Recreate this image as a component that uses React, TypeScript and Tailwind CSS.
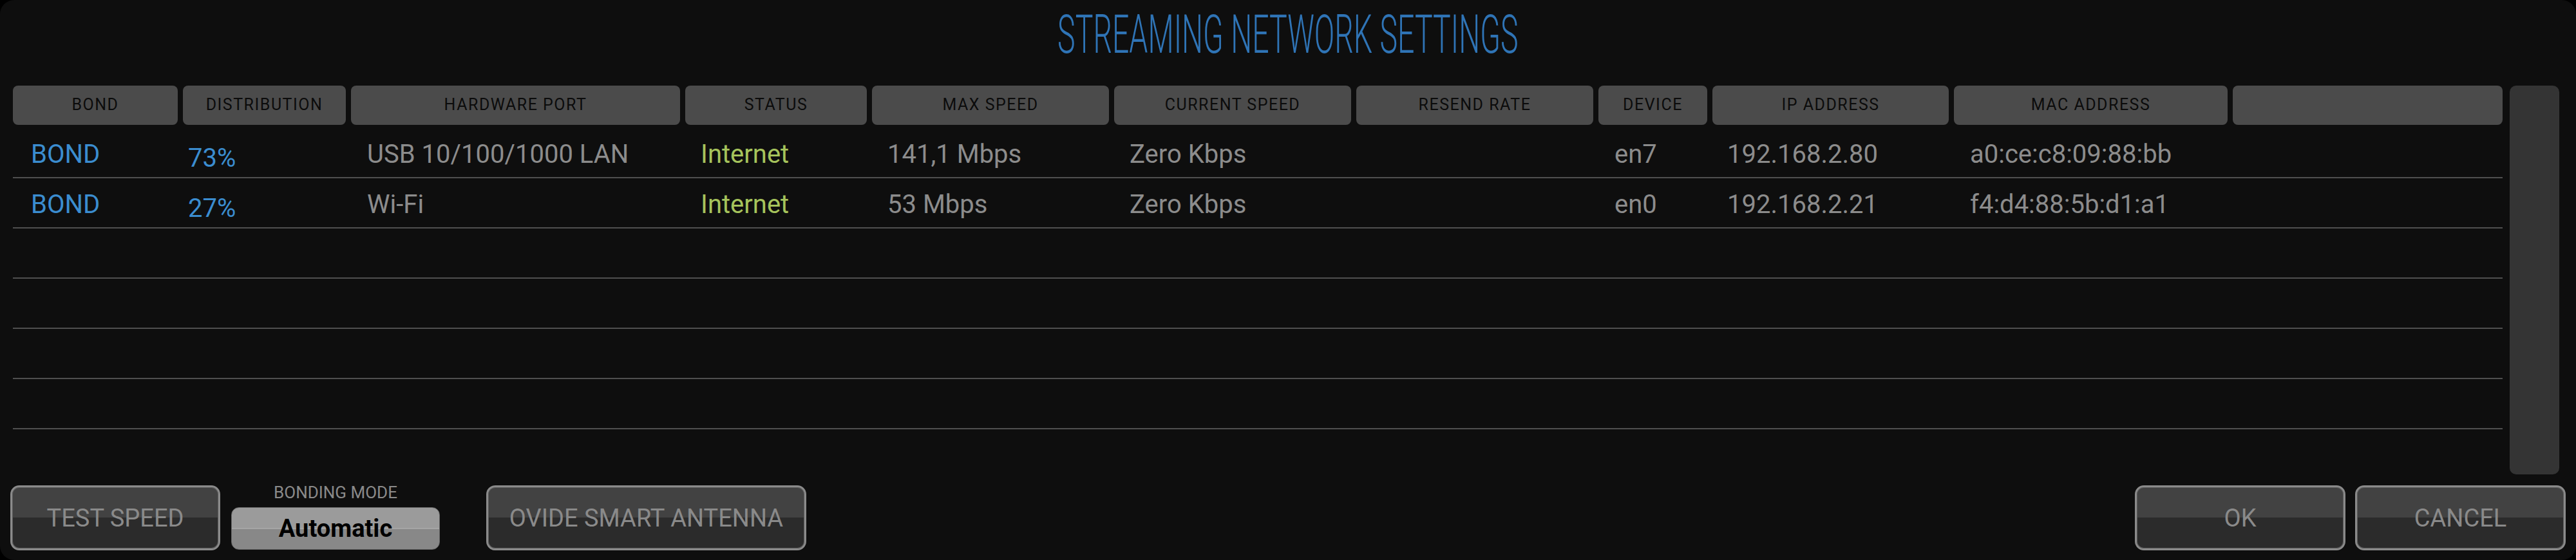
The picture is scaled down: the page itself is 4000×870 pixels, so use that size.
import React from 'react';

const COLUMNS = [
  { key: 'bond', label: 'BOND', width: 'w-[256px]', cell: 'pl-[28px] pt-[6px] text-[#3b8dd0]' },
  { key: 'dist', label: 'DISTRIBUTION', width: 'w-[253px]', cell: 'pl-[8px] pt-[18px] text-[#3b8dd0]' },
  { key: 'port', label: 'HARDWARE PORT', width: 'w-[511px]', cell: 'pl-[25px] pt-[6px] text-[#8c8c8c]' },
  { key: 'status', label: 'STATUS', width: 'w-[282px]', cell: 'pl-[24px] pt-[6px] text-[#a6c45c]' },
  { key: 'max', label: 'MAX SPEED', width: 'w-[368px]', cell: 'pl-[24px] pt-[6px] text-[#8c8c8c]' },
  { key: 'cur', label: 'CURRENT SPEED', width: 'w-[368px]', cell: 'pl-[24px] pt-[6px] text-[#8c8c8c]' },
  { key: 'resend', label: 'RESEND RATE', width: 'w-[368px]', cell: 'pl-[24px] pt-[6px] text-[#8c8c8c]' },
  { key: 'device', label: 'DEVICE', width: 'w-[169px]', cell: 'pl-[25px] pt-[6px] text-[#8c8c8c]' },
  { key: 'ip', label: 'IP ADDRESS', width: 'w-[367px]', cell: 'pl-[23px] pt-[6px] text-[#8c8c8c]' },
  { key: 'mac', label: 'MAC ADDRESS', width: 'w-[425px]', cell: 'pl-[25px] pt-[6px] text-[#8c8c8c]' },
  { key: 'extra', label: '', width: 'w-[419px]', cell: 'pl-[24px] pt-[6px] text-[#8c8c8c]' },
] as const;

type Row = Partial<Record<(typeof COLUMNS)[number]['key'], string>>;

const ROWS: Row[] = [
  {
    bond: 'BOND',
    dist: '73%',
    port: 'USB 10/100/1000 LAN',
    status: 'Internet',
    max: '141,1 Mbps',
    cur: 'Zero Kbps',
    device: 'en7',
    ip: '192.168.2.80',
    mac: 'a0:ce:c8:09:88:bb',
  },
  {
    bond: 'BOND',
    dist: '27%',
    port: 'Wi-Fi',
    status: 'Internet',
    max: '53 Mbps',
    cur: 'Zero Kbps',
    device: 'en0',
    ip: '192.168.2.21',
    mac: 'f4:d4:88:5b:d1:a1',
  },
  {},
  {},
  {},
  {},
];

function PanelButton({ label, className = '' }: { label: string; className?: string }) {
  return (
    <button
      className={`h-[101px] rounded-[14px] border-[3px] border-[#8a8a8a] bg-[linear-gradient(to_bottom,#424242_50%,#2b2b2b_50%)] shadow-[inset_0_0_0_1px_#5c5c5c] text-[38px] leading-none text-[#8a8a8a] flex items-center justify-center ${className}`}
    >
      {label}
    </button>
  );
}

export default function App() {
  return (
    <div className="w-[4000px] h-[870px] bg-black font-[Roboto,sans-serif]">
      <div className="h-full rounded-[22px] bg-[#0e0e0e] flex flex-col px-4 pb-[15px]">
        {/* title */}
        <div className="h-[133px] flex justify-center pt-[12px]">
          <h1 className="text-[83px] leading-none font-light text-[#2f74b6] scale-x-[0.56] whitespace-nowrap">
            STREAMING NETWORK SETTINGS
          </h1>
        </div>

        {/* table + scrollbar */}
        <div className="h-[606px] flex pl-1">
          <div className="w-[3866px] flex flex-col">
            <div className="h-[61px] flex gap-2">
              {COLUMNS.map((c) => (
                <div
                  key={c.key}
                  className={`${c.width} rounded-[8px] bg-[#4b4b4b] flex items-center justify-center text-[25px] tracking-[0.06em] text-[#0b0b0b]`}
                >
                  {c.label}
                </div>
              ))}
            </div>
            <div className="mt-[5px] flex flex-col">
              {ROWS.map((r, i) => (
                <div key={i} className="h-[78px] flex gap-2 border-b-2 border-[#4f4f4f]">
                  {COLUMNS.map((c) => (
                    <div key={c.key} className={`${c.width} ${c.cell} flex items-center text-[40px] leading-none whitespace-nowrap`}>
                      {r[c.key] ?? ''}
                    </div>
                  ))}
                </div>
              ))}
            </div>
          </div>
          <div className="ml-[11px] w-[77px] h-full rounded-[10px] bg-[#343434]" />
        </div>

        {/* bottom controls */}
        <div className="mt-[15px] flex items-end">
          <PanelButton label="TEST SPEED" className="w-[326px]" />
          <div className="ml-[17px] w-[324px] flex flex-col items-center">
            <span className="text-[26px] leading-none text-[#8a8a8a] mb-[10px]">BONDING MODE</span>
            <button className="w-full h-[66px] mb-[1px] rounded-[12px] border border-[#6a6a6a] bg-[linear-gradient(to_bottom,#9b9b9b_48%,#a6a6a6_48%,#a6a6a6_52%,#888888_52%)] text-[38px] leading-none font-bold text-black flex items-center justify-center">
              Automatic
            </button>
          </div>
          <PanelButton label="OVIDE SMART ANTENNA" className="ml-[72px] w-[497px]" />
          <div className="flex-1" />
          <PanelButton label="OK" className="w-[327px]" />
          <PanelButton label="CANCEL" className="ml-[15px] w-[327px]" />
        </div>
      </div>
    </div>
  );
}
